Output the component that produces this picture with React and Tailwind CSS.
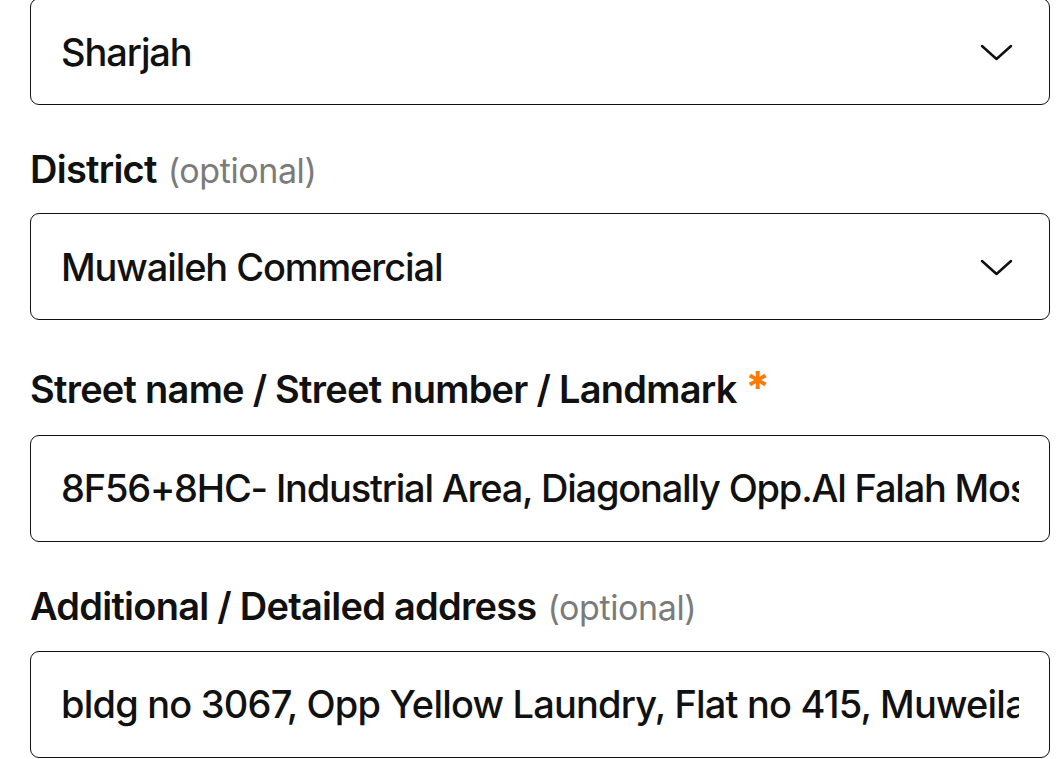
import React from 'react';

const font = { fontFamily: 'Inter, "Noto Sans", sans-serif' };

function Chevron() {
    return (
        <svg width="33" height="17" viewBox="0 0 33 17" fill="none" className="shrink-0 mt-[2px]">
            <polyline points="2,2 16.5,15 31,2" stroke="#111" strokeWidth="2.5" strokeLinecap="round" strokeLinejoin="round" />
        </svg>
    );
}

function SelectBox({ value }) {
    return (
        <div className="h-[107px] flex items-center justify-between border border-[#111] rounded-[9px] pl-[30px] pr-[36px] bg-white">
            <span className="text-[38px] leading-none font-medium text-[#111] tracking-[-1.1px]">{value}</span>
            <Chevron />
        </div>
    );
}

function TextBox({ value, tight }) {
    return (
        <div className="h-[107px] flex items-center border border-[#111] rounded-[9px] px-[30px] bg-white">
            <div className={`flex-1 overflow-hidden whitespace-nowrap text-[38px] leading-[1.3] font-medium text-[#111] ${tight ? 'tracking-[-1.2px]' : 'tracking-[-0.8px]'}`}>
                {value}
            </div>
        </div>
    );
}

function Label({ children, optional, required, className }) {
    return (
        <div className={`flex items-baseline text-[38px] leading-none font-semibold text-[#111] tracking-[-0.75px] ${className}`}>
            <span>{children}</span>
            {optional && <span className="ml-[11px] font-normal text-[#7b7b7b] text-[34px] tracking-[-0.4px]">(optional)</span>}
            {required && <span className="ml-[9px] text-[#ff7a00] text-[44px] font-bold">*</span>}
        </div>
    );
}

export default function App() {
    return (
        <div className="min-h-screen bg-white overflow-hidden" style={font}>
            <div className="w-[1020px] ml-[30px] -mt-[2px]">
                <SelectBox value="Sharjah" />

                <Label optional className="mt-[45px] mb-[25px]">District</Label>
                <SelectBox value="Muwaileh Commercial" />

                <Label required className="mt-[45px] mb-[26px]">Street name / Street number / Landmark</Label>
                <TextBox tight value="8F56+8HC- Industrial Area, Diagonally Opp.Al Falah Mosque, Sharjah" />

                <Label optional className="mt-[45px] mb-[26px]">Additional / Detailed address</Label>
                <TextBox value="bldg no 3067, Opp Yellow Laundry, Flat no 415, Muweilah, Sharjah" />
            </div>
        </div>
    );
}
